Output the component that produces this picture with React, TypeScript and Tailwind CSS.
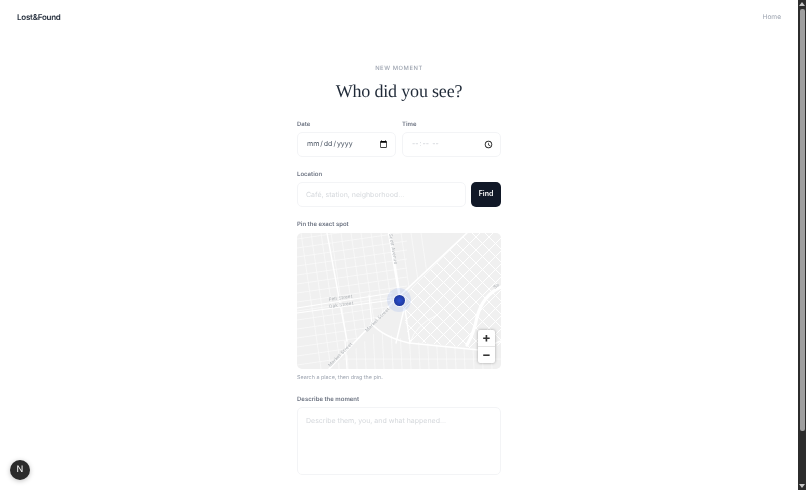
const inputBox =
	"h-[25px] rounded-[5px] border border-[#f3f4f6] bg-white pl-[8px] pr-[7px] font-['Inter',sans-serif] text-[7px] outline-none [text-rendering:geometricPrecision] [&::-webkit-calendar-picker-indicator]:m-0 [&::-webkit-calendar-picker-indicator]:h-[9px] [&::-webkit-calendar-picker-indicator]:w-[9px] [&::-webkit-calendar-picker-indicator]:p-0";
const labelText = "text-[6px] leading-[9px] font-semibold text-[#6b7280]";

function range(from: number, to: number, step: number) {
	const out: number[] = [];
	for (let v = from; v <= to; v += step) out.push(v);
	return out;
}

function StreetMap() {
	return (
		<svg viewBox="0 0 204 136" className="block h-[136px] w-[204px]" fill="none">
			<defs>
				<clipPath id="east">
					<polygon points="104,66 170,0 204,0 204,112 182,116 112,108" />
				</clipPath>
				<clipPath id="west">
					<polygon points="0,0 168,0 102,66 32,136 0,136" />
				</clipPath>
				<clipPath id="south">
					<polygon points="34,136 80,98 112,108 182,116 204,110 204,136" />
				</clipPath>
			</defs>
			<rect width="204" height="136" fill="#f0f0f0" />

			<g clipPath="url(#west)" stroke="#fafafa" strokeWidth="0.7">
				{range(-6, 136, 9).map((y) => (
					<line key={y} x1="0" y1={y + 12} x2="110" y2={y - 4} />
				))}
				{range(4, 130, 10).map((x) => (
					<line key={x} x1={x} y1="0" x2={x + 20} y2="136" />
				))}
			</g>

			<g clipPath="url(#east)" stroke="#ffffff" strokeWidth="1">
				{range(40, 360, 13).map((c) => (
					<line key={c} x1={c} y1="0" x2={c - 140} y2="140" />
				))}
				{range(-150, 200, 13).map((c) => (
					<line key={c} x1={c} y1="0" x2={c + 140} y2="140" />
				))}
			</g>

			<g clipPath="url(#south)" stroke="#fafafa" strokeWidth="0.7">
				{range(40, 200, 9).map((x) => (
					<line key={x} x1={x} y1="95" x2={x + 2} y2="136" />
				))}
				<line x1="30" y1="126" x2="204" y2="126" />
			</g>

			<g stroke="#ffffff" strokeLinecap="round">
				<path d="M30 0 L50 108" strokeWidth="1.4" />
				<path d="M92 0 L102 60" strokeWidth="2.4" />
				<path d="M0 75 L95 60" strokeWidth="1.2" />
				<path d="M0 80 L95 67" strokeWidth="1.2" />
				<path d="M32 136 L95 70 L170 0" strokeWidth="1.6" />
				<path d="M74 90 Q86 104 112 110 L182 117 L204 108" strokeWidth="1.6" />
				<path d="M107 76 L99 110 M108 76 L113 110" strokeWidth="1.4" />
				<path d="M72 62 L75 92" strokeWidth="1.2" />
				<path d="M204 54 Q186 62 180 84 Q177 100 170 112" strokeWidth="3.2" />
				<path d="M113 110 Q118 92 140 82" strokeWidth="0.8" />
				<path d="M48 108 L50 136" strokeWidth="1.1" />
			</g>

			<g
				fill="#b0b4b8"
				fontFamily="'Inter', sans-serif"
				fontSize="4.6"
				letterSpacing="0.2"
				style={{ textRendering: "geometricPrecision" }}
			>
				<text transform="translate(32 68) rotate(-8)">Fell Street</text>
				<text transform="translate(32 75) rotate(-8)">Oak Street</text>
				<text transform="translate(70 99) rotate(-45)">Market Street</text>
				<text transform="translate(33 134) rotate(-45)">Market Street</text>
				<text transform="translate(92 1) rotate(80)">Scott Avenue</text>
				<text transform="translate(198 56) rotate(-40)">Sa</text>
			</g>
		</svg>
	);
}

export default function App() {
	return (
		<div className="relative flex h-[490px] w-[806px] overflow-hidden bg-white font-['Inter',sans-serif] antialiased [text-rendering:geometricPrecision]">
			<div className="flex min-w-0 flex-1 flex-col [will-change:opacity]">
				<header className="flex h-[33px] items-center justify-between pr-[17px] pl-[17px]">
					<span className="text-[8px] font-semibold tracking-[-0.03em] text-[#1f2937]">
						Lost&amp;Found
					</span>
					<span className="mt-[2px] text-[6.6px] text-[#9ca3af]">Home</span>
				</header>

				<main className="mx-auto flex w-[204px] flex-col pt-[32px]">
					<p className="text-center text-[5.8px] leading-[8px] font-medium tracking-[0.1em] text-[#9ca3af]">
						NEW MOMENT
					</p>
					<h1 className="mt-[5px] text-center font-['Liberation_Serif',serif] text-[18px] leading-[26px] tracking-[-0.01em] text-[#1f2937]">
						Who did you see?
					</h1>

					<div className="mt-[16px] flex gap-[6px]">
						<label className="flex flex-1 flex-col gap-[3px]">
							<span className={labelText}>Date</span>
							<input type="date" className={`${inputBox} w-full text-[#4b5563]`} />
						</label>
						<label className="flex flex-1 flex-col gap-[3px]">
							<span className={labelText}>Time</span>
							<input type="time" className={`${inputBox} w-full text-[#c4c8ce]`} />
						</label>
					</div>

					<label className={`mt-[13px] mb-[3px] ${labelText}`}>Location</label>
					<div className="flex gap-[5px]">
						<input
							placeholder="Café, station, neighborhood..."
							className={`${inputBox} min-w-0 flex-1 placeholder:text-[#d5d8dc]`}
						/>
						<button className="h-[25px] w-[30px] rounded-[5px] bg-[#111827] text-[7px] font-semibold text-white">
							Find
						</button>
					</div>

					<label className={`mt-[13px] mb-[4px] ${labelText}`}>Pin the exact spot</label>
					<div className="relative h-[136px] overflow-hidden rounded-[5px]">
						<StreetMap />
						<div className="absolute top-[55px] left-[90px] flex h-[24px] w-[24px] items-center justify-center rounded-full bg-[#2563eb]/10">
							<div className="h-[11px] w-[11px] rounded-full bg-radial from-[#2b50d0] to-[#1a2f8a] shadow-[0_0_0_1px_rgba(255,255,255,0.7)]" />
						</div>
						<div className="absolute top-[97px] left-[181px] flex h-[33px] w-[17px] flex-col rounded-[2px] bg-white text-[#333333] shadow-[0_0_3px_rgba(0,0,0,0.35)]">
							<span className="flex flex-1 items-center justify-center border-b border-[#e5e5e5] text-[13px] leading-none font-bold">
								+
							</span>
							<span className="flex flex-1 items-center justify-center text-[13px] leading-none font-bold">
								−
							</span>
						</div>
					</div>
					<p className="mt-[5px] text-[5.4px] leading-[8px] text-[#9ca3af]">
						Search a place, then drag the pin.
					</p>

					<label className={`mt-[13px] mb-[3px] ${labelText}`}>Describe the moment</label>
					<textarea
						placeholder="Describe them, you, and what happened..."
						className="h-[68px] resize-none rounded-[5px] border border-[#f3f4f6] bg-white px-[8px] py-[7px] text-[7px] leading-[12px] outline-none [text-rendering:geometricPrecision] placeholder:text-[#d5d8dc]"
					/>
				</main>
			</div>

			<div className="flex w-[8px] flex-col items-center bg-[#2c2c2c]">
				<span className="mt-[2px] h-0 w-0 border-x-[3px] border-b-[4px] border-x-transparent border-b-[#c8c8c8]" />
				<div className="mt-[3px] h-[422px] w-[5px] rounded-[2px] bg-[#9f9f9f]" />
				<div className="flex-1" />
				<span className="mb-[2px] h-0 w-0 border-x-[3px] border-t-[4px] border-x-transparent border-t-[#c8c8c8]" />
			</div>

			<div className="absolute top-[460px] left-[10px] flex h-[20px] w-[20px] items-center justify-center rounded-full bg-[#2b2b2b] text-[9px] font-normal text-white shadow-[0_1px_5px_rgba(0,0,0,0.25)]">
				N
			</div>
		</div>
	);
}
